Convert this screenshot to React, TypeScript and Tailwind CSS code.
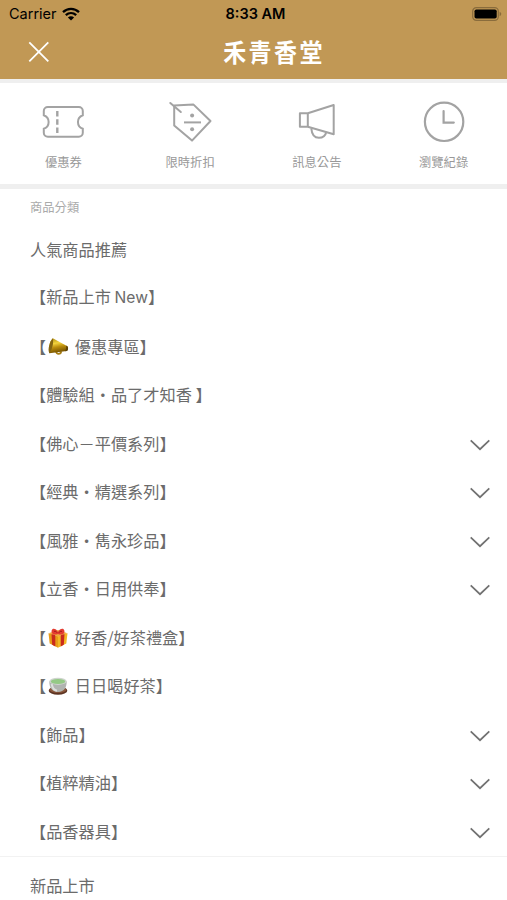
import React from 'react';

interface Shortcut {
  label: string;
  icon: React.ReactNode;
}

interface Category {
  id: string;
  name: React.ReactNode;
  emoji?: React.ReactNode;
  expandable?: boolean;
}

const WifiIcon = () => (
  <svg width="18" height="14" viewBox="0 0 18 14" fill="none" stroke="#000" strokeWidth="2.3">
    <path d="M1 5.1C5.6.7 12.4.7 17 5.1" />
    <path d="M3.8 8.2c3.1-2.9 7.3-2.9 10.4 0" />
    <path d="M9 13.6 5.9 10.5c1.9-1.6 4.3-1.6 6.2 0z" fill="#000" stroke="none" />
  </svg>
);

const BatteryIcon = () => (
  <svg width="30" height="14" viewBox="0 0 30 14">
    <rect x="0.7" y="0.7" width="25.6" height="12.6" rx="3.6" fill="none" stroke="#8a6c3c" strokeWidth="1.2" />
    <rect x="2.5" y="2.5" width="22.2" height="9" rx="1.8" fill="#000" />
    <path d="M27.6 4.8c2.2.8 2.2 3.6 0 4.4z" fill="#8a6c3c" />
  </svg>
);

const CouponIcon = () => (
  <svg width="44" height="44" viewBox="-0.8 0 44 44" fill="none" stroke="#a3a3a3" strokeWidth="2">
    <path d="M6 7h31a4 4 0 0 1 4 4v4.2a7.2 7.2 0 0 0 0 13.6v4a4 4 0 0 1-4 4H6a4 4 0 0 1-4-4v-4a7.2 7.2 0 0 0 0-13.6V11a4 4 0 0 1 4-4z" />
    <path d="M15.5 11v22" strokeWidth="2.4" strokeDasharray="5.6 2.6" />
  </svg>
);

const DiscountIcon = () => (
  <svg width="44" height="44" viewBox="0 0 44 44" fill="none" stroke="#a3a3a3" strokeWidth="2" strokeLinejoin="round">
    <path d="M6.2 5.6 25.3 4.4 42.5 21 24 40.6 6.2 25.4z" />
    <path d="M2.3 3 12.8 12" strokeLinecap="round" />
    <path d="M16 22.4h17" />
    <circle cx="24.1" cy="15.6" r="2" fill="#a3a3a3" stroke="none" />
    <circle cx="24.1" cy="29.2" r="2" fill="#a3a3a3" stroke="none" />
  </svg>
);

const NewsIcon = () => (
  <svg width="44" height="44" viewBox="-0.7 0 44 44" fill="none" stroke="#a3a3a3" strokeWidth="2" strokeLinejoin="round">
    <path d="M4.2 13.2h7.9L38 5v29.2l-25.9-7.4H4.2z" />
    <path d="M12.1 13.2v13.6" />
    <path d="M15.6 28.4c.5 6 3.5 9.4 7.6 9.4 3.8 0 6.6-2.2 7.4-5.8" />
  </svg>
);

const HistoryIcon = () => (
  <svg width="44" height="44" viewBox="0 0 44 44" fill="none" stroke="#a3a3a3" strokeWidth="2.2" strokeLinecap="round">
    <circle cx="22.1" cy="21.8" r="19.2" />
    <path d="M21.6 11v11.6h10.2" />
  </svg>
);

const MegaphoneEmoji = () => (
  <svg width="22" height="20" viewBox="0 0 22 20">
    <defs>
      <linearGradient id="brass" x1="0" y1="0" x2="0.25" y2="1">
        <stop offset="0" stopColor="#a8840c" />
        <stop offset="0.4" stopColor="#f3d33d" />
        <stop offset="0.65" stopColor="#bb8d0d" />
        <stop offset="1" stopColor="#765300" />
      </linearGradient>
    </defs>
    <path d="M9 14.2c.4 3.6 4.8 3.5 5.2.2" fill="none" stroke="#a67c13" strokeWidth="1.8" />
    <path d="M5.8 1.2 20.4 9.2c1 1 .8 4-.6 4.9L2.3 16.3C.8 11.5 2.5 4.5 5.8 1.2z" fill="url(#brass)" />
    <path d="M5.8 1.2C6.8 5.7 5.3 12.2 2.3 16.3.8 11.5 2.5 4.5 5.8 1.2z" fill="#846512" />
    <path d="m19.2 8.6 1.4.8c.9 1.5.6 3.8-.8 4.7l-1.7.2c1-1.6 1.3-4 1.1-5.7z" fill="#5d4309" />
  </svg>
);

const GiftEmoji = () => (
  <svg width="22" height="20" viewBox="0 0 22 20">
    <path d="M1.5 5.2 11 8.2v11.6L2.7 15.5z" fill="#e79b17" />
    <path d="m20.5 5.2-9.5 3v11.6l8.3-4.3z" fill="#f3b824" />
    <path d="M1.5 5.2 11 2l9.5 3.2L11 8.4z" fill="#f0a93c" />
    <path d="m4.5 6.1 3.8 1.2v11.1l-3.1-1.6zM17.5 6.1l-3.8 1.2v11.1l3.1-1.6z" fill="#ca2a1c" />
    <path d="M11 6C7.8 7.4 4 6.4 4.6 2.8 5.2-.6 9.3.5 11 4c1.7-3.5 5.8-4.6 6.4-1.2C18 6.4 14.2 7.4 11 6z" fill="#e33b30" />
    <path d="M7 3.5c1.2-.5 2.3 0 3 1.1M15 3.5c-1.2-.5-2.3 0-3 1.1" fill="none" stroke="#9e1e18" />
  </svg>
);

const TeaEmoji = () => (
  <svg width="22" height="20" viewBox="0 0 22 20">
    <ellipse cx="11" cy="14.7" rx="9.3" ry="4.1" fill="#5d3422" />
    <ellipse cx="11" cy="13.8" rx="8.5" ry="3" fill="#8a563b" />
    <path d="M2.3 5.5c0 5.5 2.2 10.4 8.7 10.4s8.7-4.9 8.7-10.4z" fill="#b0b4b0" />
    <path d="M4.7 8c.7 4 2.6 6.3 5.3 6.8" fill="none" stroke="#dcdfdc" strokeWidth="2" />
    <ellipse cx="11" cy="5.3" rx="8.7" ry="3.6" fill="#ced4cd" />
    <ellipse cx="11" cy="5.5" rx="7.2" ry="2.5" fill="#94c985" />
  </svg>
);

const ChevronIcon = () => (
  <svg width="20" height="12" viewBox="0 0 20 12" fill="none" stroke="#717171" strokeWidth="1.7">
    <path d="m.7 1.3 9.3 8.9 9.3-8.9" />
  </svg>
);

const shortcuts: Shortcut[] = [
  { label: '優惠券', icon: <CouponIcon /> },
  { label: '限時折扣', icon: <DiscountIcon /> },
  { label: '訊息公告', icon: <NewsIcon /> },
  { label: '瀏覽紀錄', icon: <HistoryIcon /> },
];

const categories: Category[] = [
  { id: 'popular', name: '人氣商品推薦' },
  {
    id: 'new',
    name: (
      <>
        【新品上市 <span className="font-['Inter',sans-serif] text-[15.6px]">New</span>】
      </>
    ),
  },
  { id: 'sale', name: ' 優惠專區】', emoji: <MegaphoneEmoji /> },
  { id: 'trial', name: '【體驗組‧品了才知香 】' },
  { id: 'value', name: '【佛心－平價系列】', expandable: true },
  { id: 'classic', name: '【經典‧精選系列】', expandable: true },
  { id: 'elegant', name: '【風雅‧雋永珍品】', expandable: true },
  { id: 'daily', name: '【立香‧日用供奉】', expandable: true },
  { id: 'gift', name: ' 好香/好茶禮盒】', emoji: <GiftEmoji /> },
  { id: 'tea', name: ' 日日喝好茶】', emoji: <TeaEmoji /> },
  { id: 'accessories', name: '【飾品】', expandable: true },
  { id: 'oils', name: '【植粹精油】', expandable: true },
  { id: 'utensils', name: '【品香器具】', expandable: true },
];

const CategoryRow: React.FC<{ category: Category }> = ({ category }) => (
  <li className="flex h-[48.5px] items-center justify-between pr-[17px] pl-[30px]">
    <span className="flex items-center pb-px whitespace-pre">
      {category.emoji && (
        <>
          <span>【</span>
          <span className="mt-0.5 mr-0.5 ml-px">{category.emoji}</span>
        </>
      )}
      <span>{category.name}</span>
    </span>
    {category.expandable && (
      <span className="pt-[3px]">
        <ChevronIcon />
      </span>
    )}
  </li>
);

const App: React.FC = () => {
  return (
    <div className="h-[900px] w-[507px] overflow-hidden bg-white font-['Noto_Sans_CJK_TC',sans-serif] text-[#6b6b6b]">
      <header className="h-[79px] bg-[#c19855]">
        <div className="grid h-7 grid-cols-3 items-center pr-[5px] pl-[9px] font-['Inter',sans-serif] text-black">
          <div className="flex items-center gap-[5px]">
            <span className="text-[14.5px]">Carrier</span>
            <WifiIcon />
          </div>
          <span className="text-center text-[14.5px] font-semibold">8:33 AM</span>
          <div className="flex justify-end">
            <BatteryIcon />
          </div>
        </div>
        <div className="grid h-12 grid-cols-[60px_1fr_60px] items-center">
          <button className="pl-7" aria-label="Close">
            <svg width="22" height="22" viewBox="0 0 22 22" fill="none" stroke="#fff" strokeWidth="1.8">
              <path d="m1.3 1.3 19 19M20.3 1.3l-19 19" />
            </svg>
          </button>
          <h1 className="scale-y-110 pb-0.5 pl-[41px] text-center text-[23px] leading-none font-bold tracking-[2.4px] text-white">
            禾青香堂
          </h1>
        </div>
      </header>

      <nav className="grid h-[110px] grid-cols-4 border-t-4 border-b-5 border-[#efefef]">
        {shortcuts.map((item) => (
          <button key={item.label} className="flex flex-col items-center pt-[17px]">
            {item.icon}
            <span className="mt-[9px] text-[12.3px] leading-[18px] text-[#999]">{item.label}</span>
          </button>
        ))}
      </nav>

      <h2 className="h-9 pt-[9px] pl-[30px] text-[12.3px] leading-[18px] text-[#aaa]">商品分類</h2>
      <ul className="text-[16.2px] leading-6">
        {categories.map((category) => (
          <CategoryRow key={category.id} category={category} />
        ))}
      </ul>
      <div className="border-t border-[#f2f2f2] pt-4 pl-[30px] text-[16.2px] leading-6">新品上市</div>
    </div>
  );
};

export default App;
